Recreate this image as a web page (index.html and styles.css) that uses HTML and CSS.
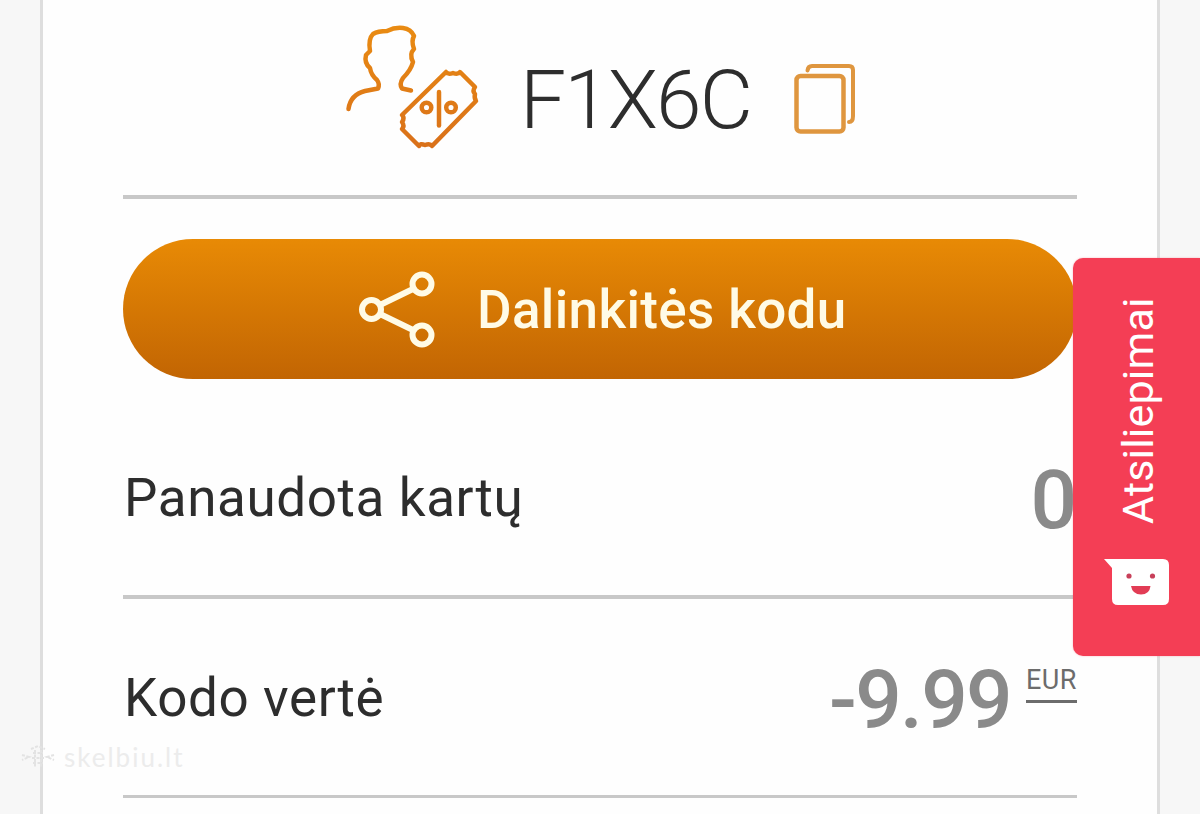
FILE: index.html
```html
<!DOCTYPE html>
<html lang="lt">
<head>
    <meta charset="UTF-8">
    <meta name="viewport" content="width=device-width, initial-scale=1.0">
    <title>Dalinkitės kodu</title>
    <link rel="stylesheet" href="styles.css">
</head>
<body>
    <div class="card">
        <div class="code-row">
            <svg class="referral-icon" width="136" height="128" viewBox="344 24 136 128" fill="none" stroke="url(#orange)" stroke-width="4.500" stroke-linecap="round" stroke-linejoin="round">
                <defs>
                    <linearGradient id="orange" gradientUnits="userSpaceOnUse" x1="0" y1="26" x2="0" y2="150">
                        <stop offset="0" stop-color="#e98b12"/>
                        <stop offset="1" stop-color="#d9701a"/>
                    </linearGradient>
                </defs>
                <path d="M348.500 109C350 98 357 93 365 91L378 88.500Q380 84 377 80Q371 75 370 68Q364 63 366 55L370 51Q368 39 373 34Q378 31 387 31Q395 27 403 28Q411 29 414 36Q411 41 414 49Q409 54 413 62Q411 70 403 78Q399 84 402 88.500L411 90.500"/>
                <path d="M446 72Q448 75 453 73Q458 75 460 72L475 87Q472 91 475 94Q474 98 476 101L432 146Q430 143 425 145Q420 143 419 146L402 129Q405 126 402 122Q405 118 402 115Z"/>
                <path d="M439 92V125.500"/>
                <circle cx="426.500" cy="107.500" r="4.800"/>
                <circle cx="451" cy="107.500" r="4.800"/>
            </svg>
            <span class="code">F1X6C</span>
            <svg class="copy-icon" width="62" height="72" viewBox="0 0 62 72" fill="none" stroke="#df963f" stroke-linecap="round">
                <rect x="2.500" y="14" width="47" height="55.500" rx="4" stroke-width="4.500"/>
                <path d="M13.500 8.500Q14 4 18 4H55Q59 4 59 8V54Q59 60 55 60" stroke-width="4"/>
            </svg>
        </div>
        <button class="share-button">
            <svg width="76" height="78" viewBox="0 0 76 78" fill="none" stroke="#fffbe6" stroke-width="6">
                <circle cx="12.500" cy="38.500" r="9.500"/>
                <circle cx="63" cy="13" r="9.500"/>
                <circle cx="63" cy="64" r="9.500"/>
                <path d="M21 34L55 17.500M21 43L55 59.500"/>
            </svg>
            <span>Dalinkitės kodu</span>
        </button>
        <div class="row">
            <span class="label">Panaudota kartų</span>
            <span class="value">0</span>
        </div>
        <div class="row">
            <span class="label">Kodo vertė</span>
            <span class="value price">-9.99</span>
            <span class="currency">EUR</span>
        </div>
    </div>

    <div class="feedback">
        <span class="feedback-text">Atsiliepimai</span>
        <svg width="66" height="48" viewBox="0 0 66 48">
            <path d="M0 0H59Q65 0 65 6V40Q65 46 59 46H14Q8 46 8 40V9Z" fill="#fff"/>
            <circle cx="25" cy="17" r="2.600" fill="#c8405a"/>
            <circle cx="48.500" cy="17" r="2.600" fill="#c8405a"/>
            <path d="M27 27H46.500Q45.500 35.500 37 35.500T27 27Z" fill="#e23c55"/>
        </svg>
    </div>

    <div class="watermark">
        <svg width="34" height="26" viewBox="0 0 34 26" fill="none" stroke="#e3e3e3" stroke-width="2" stroke-dasharray="3 1.500">
            <path d="M10 5L17 2L24 5M1 11L8 13L1 16M33 11L26 13L33 16M12 9H22M11 14H23M12 19H22M14 6V24M20 6V24"/>
        </svg>
        <span>skelbiu.lt</span>
    </div>
</body>
</html>
```

FILE: styles.css
```css
* {
    box-sizing: border-box;
}
body {
    margin: 0;
    height: 814px;
    overflow: hidden;
    background: #f7f7f7;
    font-family: Roboto, sans-serif;
    color: #2d2d2d;
}
.card {
    width: 1120px;
    height: 814px;
    margin: 0 auto;
    padding: 0 80px;
    background: #fefefe;
    border: solid #dedede;
    border-width: 0 3px;
}
.code-row {
    display: flex;
    align-items: flex-start;
    height: 199px;
    padding: 24px 0 0 221px;
    border-bottom: 4px solid #c8c8c8;
}
.code {
    width: 228px;
    margin: 28px 0 0 40px;
    font-size: 82px;
    font-weight: 300;
    line-height: 96px;
    letter-spacing: -1.9px;
    white-space: nowrap;
}
.copy-icon {
    margin: 38px 0 0 46px;
}
.share-button {
    display: flex;
    align-items: center;
    width: 954px;
    height: 140px;
    margin: 40px 0 20px;
    padding: 1px 0 0 236px;
    gap: 42px;
    border: none;
    border-radius: 70px;
    background: linear-gradient(#e88a05, #c26503);
    color: #fffbe6;
    font: 500 53px/62px Roboto, sans-serif;
    letter-spacing: 0.35px;
    white-space: nowrap;
    cursor: pointer;
}
.row {
    display: flex;
    align-items: center;
    height: 200px;
    border-bottom: 4px solid #c8c8c8;
}
.row:last-child {
    height: 199px;
    border-bottom-width: 3px;
}
.label {
    margin-right: auto;
    padding: 2px 0 0 1px;
    font-size: 53px;
    letter-spacing: 0.6px;
}
.value {
    padding-top: 5px;
    font-size: 82px;
    font-weight: 500;
    line-height: 96px;
    color: #8a8a8a;
}
.price {
    letter-spacing: -1.7px;
}
.currency {
    align-self: flex-start;
    height: 37px;
    margin: 67px 0 0 15px;
    border-bottom: 3px solid #6c6c6c;
    font-size: 27px;
    line-height: 28px;
    letter-spacing: 0.5px;
    color: #6c6c6c;
}
/* Tab fixed to the right edge of the window */
.feedback {
    position: absolute;
    top: 258px;
    right: 0;
    display: flex;
    flex-direction: column;
    align-items: center;
    width: 127px;
    height: 398px;
    padding-top: 40px;
    border-radius: 10px 0 0 10px;
    background: #f43e55;
    box-shadow: 0 0 2px #f43e5566;
    color: #fff;
}
.feedback-text {
    height: 226px;
    margin: 0 -2px 35px 0;
    writing-mode: vertical-rl;
    transform: rotate(180deg);
    font-size: 43px;
    line-height: 50px;
    letter-spacing: 0.2px;
    white-space: nowrap;
}
.watermark {
    position: absolute;
    left: 21px;
    top: 742px;
    display: flex;
    align-items: center;
    gap: 9px;
    color: #ececec;
    font: 26px/30px Lato, sans-serif;
    letter-spacing: 2px;
}
```
